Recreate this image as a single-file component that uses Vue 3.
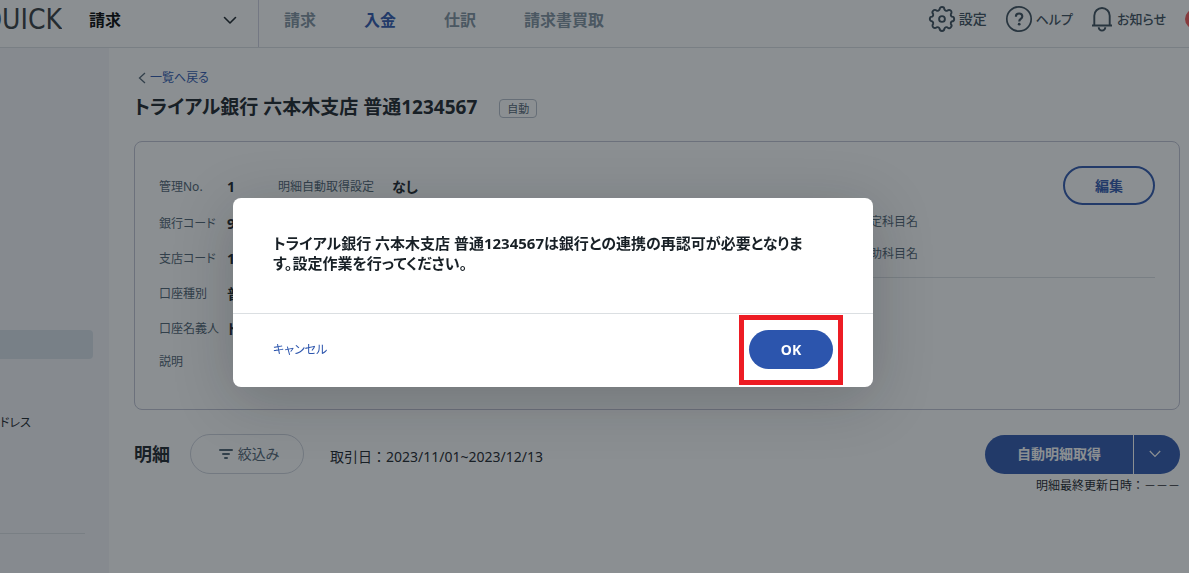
<script setup>
import { ref } from 'vue'

const dialogOpen = ref(true)

const tabs = [
  { label: '請求', active: false },
  { label: '入金', active: true },
  { label: '仕訳', active: false },
  { label: '請求書買取', active: false },
]

const fields = [
  { label: '管理No.', value: '1' },
  { label: '銀行コード', value: '9' },
  { label: '支店コード', value: '1' },
  { label: '口座種別', value: '普' },
  { label: '口座名義人', value: 'ト' },
  { label: '説明', value: '' },
]

function close() {
  dialogOpen.value = false
}
</script>

<template>
  <div class="app">
    <header class="header">
      <div class="brand">
        <span class="logo">QUICK</span>
        <button class="product" type="button">
          <span>請求</span>
          <svg width="14" height="9" viewBox="0 0 14 9" fill="none" stroke="#182026" stroke-width="1.6" stroke-linecap="round" stroke-linejoin="round"><path d="M1.5 1.5 7 7l5.500-5.500" /></svg>
        </button>
      </div>
      <nav class="tabs">
        <a v-for="t in tabs" :key="t.label" href="#" :class="{ active: t.active }">{{ t.label }}</a>
      </nav>
      <div class="tools">
        <a href="#" class="tool settings">
          <svg width="28" height="28" viewBox="0 0 28 28" fill="none" stroke="currentColor" stroke-width="1.9" stroke-linejoin="round" stroke-linecap="round">
            <path d="M11.6 4.400a2.400 2.400 0 0 1 4.800 0a2.300 2.300 0 0 0 3 1.300a2.400 2.400 0 0 1 3.400 3.400a2.300 2.300 0 0 0 1 2.500a2.400 2.400 0 0 1 0 4.800a2.300 2.300 0 0 0-1 2.500a2.400 2.400 0 0 1-3.400 3.400a2.300 2.300 0 0 0-3 1.300a2.400 2.400 0 0 1-4.800 0a2.300 2.300 0 0 0-3-1.300a2.400 2.400 0 0 1-3.400-3.400a2.300 2.300 0 0 0-1-2.500a2.400 2.400 0 0 1 0-4.800a2.300 2.300 0 0 0 1-2.500a2.400 2.400 0 0 1 3.400-3.400a2.300 2.300 0 0 0 3-1.300z" />
            <circle cx="14" cy="14" r="2.900" />
          </svg>
          <span>設定</span>
        </a>
        <a href="#" class="tool help">
          <svg width="28" height="28" viewBox="0 0 28 28" fill="none" stroke="currentColor">
            <circle cx="14" cy="14" r="12.200" stroke-width="1.700" />
            <path d="M10.900 11.700c0-2 1.300-3.200 3.200-3.200s3.200 1.200 3.200 2.900c0 2.500-3.100 2.500-3.100 5" stroke-width="2.100" />
            <circle cx="14.200" cy="19.200" r="1.400" fill="currentColor" stroke="none" />
          </svg>
          <span>ヘルプ</span>
        </a>
        <a href="#" class="tool bell">
          <svg width="22" height="28" viewBox="0 0 22 28" fill="none" stroke="currentColor" stroke-width="1.900">
            <path d="M1 20.500h20M3.300 20.500V10.700a7.700 7.700 0 0 1 15.400 0v9.800M7.700 22.300a3.300 3.300 0 0 0 6.600 0" />
          </svg>
          <span>お知らせ</span>
        </a>
        <span class="avatar"></span>
      </div>
    </header>

    <div class="body">
      <aside class="side">
        <div class="side-current"></div>
        <a href="#" class="side-link">ドレス</a>
        <hr class="side-line" />
      </aside>

      <main class="main">
        <a href="#" class="back">
          <svg width="8" height="12" viewBox="0 0 8 12" fill="none" stroke="#4d6070" stroke-width="1.300"><path d="M7 1 1.500 6 7 11" /></svg>
          <span>一覧へ戻る</span>
        </a>
        <div class="title-row">
          <h1>トライアル銀行 六本木支店 普通1234567</h1>
          <span class="badge">自動</span>
        </div>

        <section class="card">
          <dl class="fields">
            <div v-for="f in fields" :key="f.label" class="field">
              <dt>{{ f.label }}</dt>
              <dd>{{ f.value }}</dd>
            </div>
          </dl>
          <dl class="auto">
            <dt>明細自動取得設定</dt>
            <dd>なし</dd>
          </dl>
          <div class="accounts">
            <button type="button" class="edit">編集</button>
            <div class="account-list">
              <p>勘定科目名</p>
              <p>補助科目名</p>
            </div>
          </div>
        </section>

        <section class="details">
          <h2>明細</h2>
          <button type="button" class="filter">
            <svg width="14" height="11" viewBox="0 0 14 11" fill="currentColor"><rect width="14" height="2" rx="1" /><rect x="3" y="4" width="8" height="2" rx="1" /><rect x="5" y="8" width="4" height="2" rx="1" /></svg>
            <span>絞込み</span>
          </button>
          <p class="period">取引日：2023/11/01~2023/12/13</p>
          <div class="split">
            <button type="button" class="fetch">自動明細取得</button>
            <button type="button" class="more" aria-label="その他">
              <svg width="12" height="8" viewBox="0 0 12 8" fill="none" stroke="currentColor" stroke-width="1.200"><path d="M.8 1 6 6.500 11.200 1" /></svg>
            </button>
          </div>
        </section>
        <p class="updated">明細最終更新日時：－－－</p>
      </main>
    </div>

    <div v-if="dialogOpen" class="overlay">
      <div class="dialog" role="dialog" aria-modal="true" aria-labelledby="dialog-message">
        <p id="dialog-message" class="message">トライアル銀行 六本木支店 普通1234567は銀行との連携の再認可が必要となりま<br />す。設定作業を行ってください。</p>
        <footer class="actions">
          <button type="button" class="cancel" @click="close">キャンセル</button>
          <div class="marked">
            <button type="button" class="ok" @click="close">OK</button>
          </div>
        </footer>
      </div>
    </div>
  </div>
</template>

<style>
body {
  margin: 0;
  background: #fff;
}
</style>

<style scoped>
.app {
  display: flex;
  flex-direction: column;
  min-height: 100vh;
  overflow: hidden;
  color: #182026;
  font-family: "Noto Sans", "Noto Sans CJK JP", sans-serif;
  font-size: 14px;
  line-height: 20px;
  font-feature-settings: "palt";
}
.app * {
  box-sizing: border-box;
}
h1, h2, p, dl, dd, hr {
  margin: 0;
}
a {
  color: inherit;
  text-decoration: none;
}
button {
  padding: 0;
  border: 0;
  background: none;
  color: inherit;
  font: inherit;
  font-feature-settings: inherit;
  cursor: pointer;
}
svg {
  display: block;
  flex: none;
}

.header {
  display: flex;
  height: 48px;
  border-bottom: 1px solid #dbdfe2;
  font-size: 16px;
  white-space: nowrap;
}
.brand {
  display: flex;
  width: 259px;
  padding-bottom: 7px;
  border-right: 1px solid #d0d0e0;
}
.logo {
  display: flex;
  justify-content: flex-end;
  align-items: center;
  width: 62px;
  overflow: hidden;
  color: #33393d;
  font-family: "Liberation Sans Narrow", "DejaVu Sans Condensed", sans-serif;
  font-size: 28px;
}
.product {
  display: flex;
  flex: 1;
  align-items: center;
  justify-content: space-between;
  padding: 0 21px 0 27px;
  font-weight: 700;
  color: #000;
}
.tabs {
  display: flex;
  align-items: center;
  gap: 48px;
  padding: 0 0 7px 25px;
  color: #7e909e;
  font-weight: 700;
}
.tabs .active {
  color: #2c55ad;
}
.tools {
  display: flex;
  align-items: center;
  margin-left: auto;
  padding-bottom: 9px;
  color: #394b59;
  font-size: 13px;
  font-weight: 500;
}
.tool {
  display: flex;
  align-items: center;
  gap: 3px;
  margin-right: 18px;
}
.tool.bell {
  gap: 4px;
  margin-right: 19px;
}
.settings {
  font-size: 14px;
}
.avatar {
  flex: none;
  width: 20px;
  height: 20px;
  margin-right: -16px;
  border-radius: 50%;
  background: #f55656;
}

.body {
  display: flex;
  flex: 1;
}
.side {
  width: 109px;
  flex: none;
  padding-top: 282px;
  background: #f5f5f9;
}
.side-current {
  height: 29px;
  margin-right: 16px;
  border-radius: 0 4px 4px 0;
  background: #d8e1e8;
}
.side-link {
  display: block;
  margin-top: 54px;
  font-size: 12px;
}
.side-line {
  margin: 100px 24px 0 0;
  border: 0;
  border-top: 1px solid #dbdfe2;
}

.main {
  flex: 1;
  min-width: 0;
  padding: 20px 9px 0 25px;
}
.back {
  display: inline-flex;
  align-items: center;
  gap: 4px;
  padding-left: 4px;
  color: #2c55ad;
  font-size: 12px;
}
.title-row {
  display: flex;
  align-items: center;
  gap: 22px;
}
h1 {
  font-size: 19px;
  line-height: 36px;
}
.badge {
  margin-top: 3px;
  padding: 0 7px;
  border: 1px solid #b5bcc8;
  border-radius: 4px;
  color: #4d6070;
  font-size: 11px;
  line-height: 17px;
}
.card {
  display: flex;
  height: 269px;
  margin-top: 16px;
  padding: 24px;
  border: 1px solid #c0c2d2;
  border-radius: 8px;
}
.fields {
  width: 119px;
  padding-top: 11px;
  flex: none;
}
.field {
  display: flex;
  height: 35px;
  white-space: nowrap;
}
.field:first-child {
  height: 37px;
}
.field:nth-child(5) {
  height: 33px;
}
dt {
  width: 68px;
  color: #4d6070;
  font-size: 12px;
}
dd {
  font-weight: 700;
}
.auto {
  display: flex;
  padding-top: 11px;
  white-space: nowrap;
}
.auto dt {
  width: 114px;
}
.accounts {
  flex: 1;
  margin-left: 24px;
  text-align: right;
}
.edit {
  width: 92px;
  height: 39px;
  border: 2px solid #2c55ad;
  border-radius: 20px;
  color: #2c55ad;
  font-weight: 700;
}
.account-list {
  width: calc(100% - 16px);
  margin: 7px 0 0 auto;
  padding-bottom: 13px;
  border-bottom: 1px solid #dbdfe2;
  color: #4d6070;
  font-size: 12px;
}
.account-list p {
  padding-right: 237px;
}
.account-list p + p {
  margin-top: 12px;
}

.details {
  display: flex;
  align-items: center;
  margin-top: 24px;
}
h2 {
  font-size: 18px;
}
.filter {
  display: flex;
  align-items: center;
  justify-content: center;
  gap: 5px;
  width: 114px;
  height: 40px;
  margin: 0 26px 0 20px;
  padding-left: 4px;
  border: 1px solid #ced2dc;
  border-radius: 20px;
  color: #4d6070;
}
.period {
  padding-top: 6px;
  font-feature-settings: normal;
}
.split {
  display: flex;
  height: 39px;
  margin-left: auto;
  overflow: hidden;
  border-radius: 20px;
  background: #2c55ad;
  color: #fff;
}
.fetch {
  padding: 0 32px;
  font-weight: 700;
}
.more {
  display: flex;
  align-items: center;
  justify-content: center;
  width: 47px;
  padding-right: 5px;
  border-left: 1px solid #fff;
}
.updated {
  font-size: 12px;
  line-height: 24px;
  text-align: right;
  font-feature-settings: normal;
}

.overlay {
  position: fixed;
  inset: 0;
  display: flex;
  align-items: flex-start;
  justify-content: center;
  padding: 198px 83px 0 0;
  background: rgba(24, 32, 38, 0.5);
}
.dialog {
  width: 640px;
  border-radius: 8px;
  background: #fff;
  box-shadow: 0 12px 60px rgba(16, 22, 26, 0.22);
}
.message {
  padding: 35px 0 40px 40px;
  font-size: 15px;
  font-weight: 700;
  white-space: nowrap;
}
.actions {
  display: flex;
  align-items: center;
  justify-content: space-between;
  height: 74px;
  padding: 0 40px 2px;
  border-top: 1px solid #dbdfe2;
}
.cancel {
  color: #2c55ad;
  font-size: 12px;
}
.marked {
  position: relative;
}
.marked::after {
  content: "";
  position: absolute;
  inset: -15px -10px -16px;
  border: 5px solid #ed1c24;
  pointer-events: none;
}
.ok {
  display: block;
  width: 84px;
  height: 39px;
  border-radius: 20px;
  background: #2c55ad;
  color: #fff;
  font-weight: 700;
}
</style>
